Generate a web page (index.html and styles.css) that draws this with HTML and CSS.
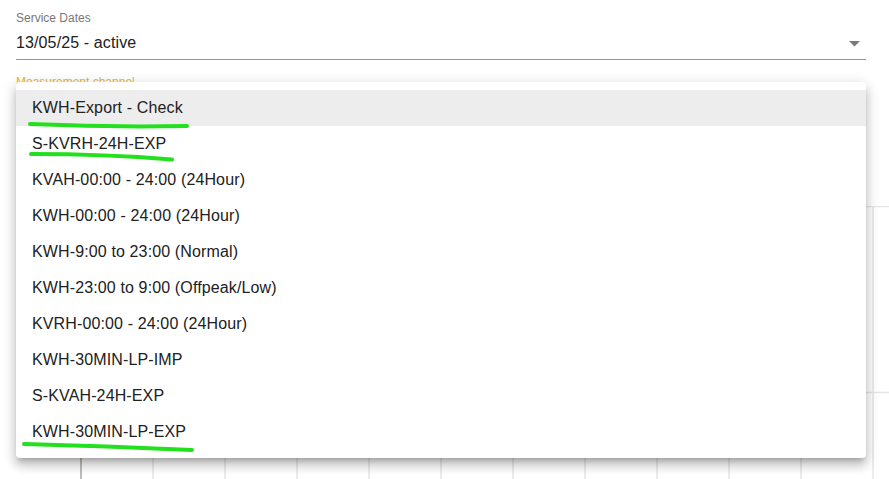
FILE: index.html
```html
<!DOCTYPE html>
<html lang="en">
<head>
<meta charset="utf-8">
<title>Measurement channel</title>
<link rel="stylesheet" href="styles.css">
</head>
<body>
<div class="page">
  <div class="field">
    <div class="field-label">Service Dates</div>
    <div class="field-input">
      <span class="field-value">13/05/25 - active</span>
      <svg class="arrow" width="11" height="5.5" viewBox="0 0 10 5"><path d="M0 0l5 5 5-5z" fill="#7a7a7a"/></svg>
    </div>
  </div>
  <div class="field field-second">
    <div class="field-label focused">Measurement channel</div>
  </div>

  <div class="chart">
    <svg width="889" height="280" viewBox="0 0 889 280">
      <g stroke="#e6e6e6" stroke-width="1.5">
        <line x1="81" y1="0.5" x2="889" y2="0.5"/>
        <line x1="81" y1="186.5" x2="889" y2="186.5"/>
        <line x1="153" y1="0" x2="153" y2="280"/>
        <line x1="225" y1="0" x2="225" y2="280"/>
        <line x1="297" y1="0" x2="297" y2="280"/>
        <line x1="369" y1="0" x2="369" y2="280"/>
        <line x1="441" y1="0" x2="441" y2="280"/>
        <line x1="513" y1="0" x2="513" y2="280"/>
        <line x1="585" y1="0" x2="585" y2="280"/>
        <line x1="657" y1="0" x2="657" y2="280"/>
        <line x1="729" y1="0" x2="729" y2="280"/>
        <line x1="801" y1="0" x2="801" y2="280"/>
        <line x1="873" y1="0" x2="873" y2="280"/>
      </g>
      <line x1="81" y1="0" x2="81" y2="280" stroke="#a8a8a8" stroke-width="1.5"/>
    </svg>
  </div>

  <ul class="menu">
    <li class="menu-item selected">KWH-Export - Check</li>
    <li class="menu-item">S-KVRH-24H-EXP</li>
    <li class="menu-item">KVAH-00:00 - 24:00 (24Hour)</li>
    <li class="menu-item">KWH-00:00 - 24:00 (24Hour)</li>
    <li class="menu-item">KWH-9:00 to 23:00 (Normal)</li>
    <li class="menu-item">KWH-23:00 to 9:00 (Offpeak/Low)</li>
    <li class="menu-item">KVRH-00:00 - 24:00 (24Hour)</li>
    <li class="menu-item">KWH-30MIN-LP-IMP</li>
    <li class="menu-item">S-KVAH-24H-EXP</li>
    <li class="menu-item">KWH-30MIN-LP-EXP</li>
  </ul>

  <svg class="marks" width="889" height="479" viewBox="0 0 889 479">
    <g fill="none" stroke="#22e01e" stroke-width="4" stroke-linecap="round">
      <path d="M30 124 Q110 127.5 187 126"/>
      <path d="M31 154 Q105 154 172 159.5"/>
      <path d="M24 444 Q105 446 192 450"/>
    </g>
  </svg>
</div>
</body>
</html>
```

FILE: styles.css
```css
* { box-sizing: border-box; }
html, body {
  margin: 0;
  padding: 0;
  background: #ffffff;
  font-family: "Liberation Sans", Arial, sans-serif;
  overflow: hidden;
}
.page {
  position: relative;
  width: 889px;
  height: 479px;
  overflow: hidden;
}
.field {
  margin: 0 23px 0 16px;
}
.field-label {
  padding-top: 10px;
  font-size: 12px;
  line-height: 16px;
  color: #777777;
}
.field-label.focused {
  color: #e5b43c;
}
.field-input {
  display: flex;
  align-items: center;
  justify-content: space-between;
  margin-top: 6px;
  height: 28px;
  padding-bottom: 6px;
  border-bottom: 1px solid #949494;
}
.field-value {
  font-size: 16px;
  line-height: 20px;
  letter-spacing: 0.12px;
  color: #212121;
}
.arrow {
  margin-right: 6px;
  margin-top: 3px;
}
.field-second .field-label {
  padding-top: 14px;
}
.chart {
  margin-top: 116px;
}
.chart svg { display: block; }
.menu {
  position: absolute;
  top: 82px;
  left: 16px;
  width: 850px;
  margin: 0;
  padding: 8px 0;
  list-style: none;
  background: #ffffff;
  border-radius: 4px;
  box-shadow: 0 5px 5px -3px rgba(0,0,0,0.2), 0 8px 10px 1px rgba(0,0,0,0.14), 0 3px 14px 2px rgba(0,0,0,0.12);
}
.menu-item {
  height: 36px;
  padding: 0 16px;
  display: flex;
  align-items: center;
  font-size: 16px;
  letter-spacing: 0.13px;
  color: #212121;
}
.menu-item.selected {
  background: #ededed;
}
.marks {
  position: absolute;
  top: 0;
  left: 0;
  pointer-events: none;
}
```
